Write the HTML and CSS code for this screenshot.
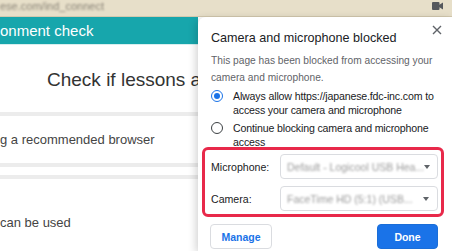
FILE: index.html
```html
<!DOCTYPE html>
<html lang="en">
<head>
  <meta charset="UTF-8" />
  <title>Environment check</title>
  <link rel="stylesheet" href="styles.css">
</head>
<body>
  <div class="topbar">
    <span class="url">ese.com/ind_connect</span>
    <svg class="cam-icon" width="11" height="8" viewBox="0 0 11 8">
      <rect x="0" y="0" width="7.5" height="8" rx="1" fill="#55585c"/>
      <path d="M7 3 L11 0.5 L11 7.5 L7 5 Z" fill="#55585c"/>
    </svg>
  </div>

  <div class="page">
    <div class="page-header">onment check</div>
    <div class="hero">Check if lessons are available</div>
    <div class="check-row">g a recommended browser</div>
    <div class="row-gap"></div>
    <div class="check-row check-row-last">can be used</div>
  </div>

  <!-- Site permission bubble -->
  <div class="bubble">
    <div class="bubble-head">
      <div class="bubble-title">Camera and microphone blocked</div>
      <svg class="close" width="10" height="10" viewBox="0 0 10 10">
        <path d="M1 1 L9 9 M9 1 L1 9" stroke="#5f6368" stroke-width="1.4"/>
      </svg>
    </div>
    <div class="bubble-text">
      This page has been blocked from accessing your camera and microphone.
    </div>

    <label class="option">
      <span class="radio checked"></span>
      <span>Always allow https://japanese.fdc-inc.com to access your camera and microphone</span>
    </label>
    <label class="option">
      <span class="radio"></span>
      <span>Continue blocking camera and microphone access</span>
    </label>

    <div class="devices">
      <div class="device-row">
        <span class="device-label">Microphone:</span>
        <div class="select">
          <span class="select-value">Default - Logicool USB Hea...</span>
          <span class="caret"></span>
        </div>
      </div>
      <div class="device-row">
        <span class="device-label">Camera:</span>
        <div class="select">
          <span class="select-value">FaceTime HD (5:1) (USB...</span>
          <span class="caret"></span>
        </div>
      </div>
    </div>

    <div class="actions">
      <button class="btn btn-manage">Manage</button>
      <button class="btn btn-done">Done</button>
    </div>
  </div>
</body>
</html>
```

FILE: styles.css
```css
body {
  margin: 0;
  font-family: 'Liberation Sans', Arial, sans-serif;
  background-color: #ffffff;
  width: 452px;
  height: 251px;
  overflow: hidden;
  position: relative;
}

.topbar {
  height: 16px;
  background-color: #e7dfc9;
  border-bottom: 1px solid #d3c9ae;
  display: flex;
  align-items: flex-start;
  justify-content: space-between;
  padding: 0 9px 0 0;
  overflow: hidden;
}

.url {
  font-size: 11px;
  line-height: 13px;
  color: #8a8478;
  filter: blur(1px);
}

.cam-icon {
  margin-top: 2px;
}

.page {
  width: 198px;
  height: 234px;
  overflow: hidden;
}

.page-header {
  height: 27px;
  background-color: #17a6ac;
  border-bottom: 1px solid #d7eeee;
  color: #ffffff;
  font-size: 15px;
  line-height: 27px;
  white-space: nowrap;
}

.hero {
  height: 67px;
  line-height: 70px;
  font-size: 19px;
  color: #333333;
  padding-left: 47px;
  white-space: nowrap;
}

.check-row {
  height: 47px;
  line-height: 47px;
  border-top: 4px solid #ececec;
  border-bottom: 4px solid #ececec;
  font-size: 13px;
  color: #444444;
  white-space: nowrap;
}

.row-gap {
  height: 8px;
}

.check-row-last {
  height: 64px;
  border-bottom: none;
  line-height: 88px;
}

/* Permission bubble */
.bubble {
  position: absolute;
  left: 198px;
  top: 17px;
  width: 254px;
  height: 234px;
  background: #ffffff;
  border-radius: 8px 0 0 0;
  box-shadow: -2px 2px 8px rgba(0, 0, 0, 0.18);
  padding: 12px 14px 0 13px;
  box-sizing: border-box;
  color: #202124;
  overflow: hidden;
}

.bubble-head {
  display: flex;
  justify-content: space-between;
  align-items: flex-start;
}

.bubble-title {
  font-size: 12.6px;
  line-height: 18px;
}

.close {
  margin-top: -4px;
  margin-right: -4px;
}

.bubble-text {
  margin-top: 5px;
  font-size: 10.2px;
  line-height: 17px;
  color: #5f6368;
}

.option {
  display: flex;
  gap: 10px;
  font-size: 10.6px;
  line-height: 14px;
  letter-spacing: -0.15px;
  margin-top: 3px;
}

.option + .option {
  margin-top: 4px;
}

.radio {
  flex: none;
  width: 12px;
  height: 12px;
  box-sizing: border-box;
  border: 1.5px solid #3c4043;
  border-radius: 50%;
  position: relative;
  margin-top: 1px;
}

.radio.checked {
  border-color: #1a73e8;
}

.radio.checked::after {
  content: '';
  position: absolute;
  left: 1.5px;
  top: 1.5px;
  width: 6px;
  height: 6px;
  border-radius: 50%;
  background: #1a73e8;
}

.devices {
  margin: -2px -6px 0 -9px;
  border: 3px solid #e8294a;
  border-radius: 6px;
  padding: 4px 3px 3px 6px;
  display: flex;
  flex-direction: column;
  gap: 7px;
}

.device-row {
  display: flex;
  align-items: center;
  justify-content: space-between;
}

.device-label {
  font-size: 10.6px;
  color: #202124;
}

.select {
  width: 158px;
  height: 25px;
  border: 1px solid #dadce0;
  border-radius: 4px;
  box-sizing: border-box;
  display: flex;
  align-items: center;
  justify-content: space-between;
  padding: 0 8px 0 6px;
}

.select-value {
  font-size: 10.5px;
  color: #9a9a9a;
  filter: blur(1.3px);
  white-space: nowrap;
}

.caret {
  width: 0;
  height: 0;
  border-left: 3px solid transparent;
  border-right: 3px solid transparent;
  border-top: 4px solid #5f6368;
}

.actions {
  display: flex;
  justify-content: space-between;
  margin-top: 7px;
  margin-left: -1px;
}

.btn {
  height: 25px;
  border-radius: 4px;
  font-family: 'Liberation Sans', Arial, sans-serif;
  font-size: 10.5px;
  font-weight: 700;
  cursor: pointer;
  padding: 0;
}

.btn-manage {
  width: 62px;
  background: #ffffff;
  border: 1px solid #dadce0;
  color: #1a73e8;
}

.btn-done {
  width: 61px;
  background: #1a73e8;
  border: 1px solid #1a6ed8;
  color: #ffffff;
}
```
